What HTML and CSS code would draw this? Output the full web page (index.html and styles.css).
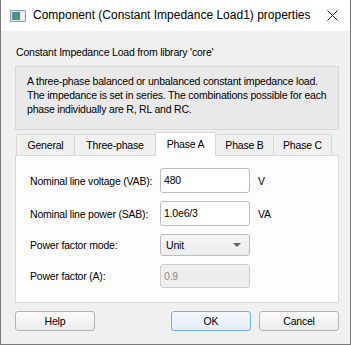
FILE: index.html
```html
<!DOCTYPE html>
<html lang="en">
<head>
    <meta charset="UTF-8">
    <title>Component (Constant Impedance Load1) properties</title>
    <link rel="stylesheet" href="styles.css">
</head>
<body>
    <div class="window">
        <!-- Barra de titulo -->
        <div class="titlebar">
            <svg class="app-icon" width="16" height="12" viewBox="0 0 16 12">
                <defs>
                    <linearGradient id="g1" x1="0" y1="0" x2="1" y2="1">
                        <stop offset="0" stop-color="#3d8fb0"/>
                        <stop offset="1" stop-color="#4f9a5c"/>
                    </linearGradient>
                </defs>
                <rect x="0.5" y="0.5" width="15" height="11" fill="#dfe3e6" stroke="#9aa3aa"/>
                <rect x="2" y="2" width="8" height="8" fill="url(#g1)"/>
                <rect x="11" y="2" width="3" height="8" fill="#f4f6f7"/>
            </svg>
            <span class="title">Component (Constant Impedance Load1) properties</span>
            <svg class="close" width="11" height="11" viewBox="0 0 11 11">
                <path d="M0.5 0.5 L10.5 10.5 M10.5 0.5 L0.5 10.5" stroke="#1a1a1a" stroke-width="1"/>
            </svg>
        </div>

        <div class="content">
            <div class="source">Constant Impedance Load from library 'core'</div>

            <div class="description">
                A three-phase balanced or unbalanced constant impedance load.<br>
                The impedance is set in series. The combinations possible for each<br>
                phase individually are R, RL and RC.
            </div>

            <!-- Pestañas -->
            <div class="tabs">
                <div class="tab">General</div>
                <div class="tab tab-three">Three-phase</div>
                <div class="tab active">Phase A</div>
                <div class="tab">Phase B</div>
                <div class="tab">Phase C</div>
            </div>

            <div class="pane">
                <div class="row r1">
                    <label>Nominal line voltage (VAB):</label>
                    <div class="field">480</div>
                    <span class="unit">V</span>
                </div>
                <div class="row r2">
                    <label>Nominal line power (SAB):</label>
                    <div class="field">1.0e6/3</div>
                    <span class="unit">VA</span>
                </div>
                <div class="row r3">
                    <label>Power factor mode:</label>
                    <div class="field combo">Unit<span class="arrow"></span></div>
                </div>
                <div class="row r4">
                    <label>Power factor (A):</label>
                    <div class="field disabled">0.9</div>
                </div>
            </div>

            <div class="buttons">
                <button class="btn">Help</button>
                <span class="spacer"></span>
                <button class="btn default">OK</button>
                <button class="btn">Cancel</button>
            </div>
        </div>
    </div>
</body>
</html>
```

FILE: styles.css
```css
body {
    margin: 0;
    font-family: "Liberation Sans", Arial, sans-serif;
    font-size: 10.5px;
    letter-spacing: -0.2px;
    color: #000;
    background-color: #f0f0f0;
    white-space: nowrap;
}

.window {
    width: 349px;
    height: 344px;
    background-color: #f0f0f0;
    border: 1px solid #7a7a7a;
    border-top: none;
    display: flex;
    flex-direction: column;
}

/* Barra de titulo */
.titlebar {
    height: 31px;
    background-color: #ffffff;
    display: flex;
    align-items: center;
    padding-left: 9px;
}

.app-icon {
    margin-right: 7px;
    flex-shrink: 0;
}

.title {
    font-size: 12px;
    letter-spacing: 0;
    color: #000;
    flex: 1;
    margin-top: -1px;
}

.close {
    flex-shrink: 0;
    margin-right: 12px;
}

.content {
    padding: 0 11px 0 14px;
}

.source {
    margin-top: 15px;
    padding-left: 1px;
    line-height: 12px;
    height: 12px;
}

.description {
    margin-top: 8px;
    height: 47px;
    padding: 7px 10px 8px 11px;
    border: 1px solid #d8d8d8;
    background-color: #e9e9e9;
    line-height: 14px;
}

/* Pestañas */
.tabs {
    display: flex;
    align-items: flex-end;
    margin-top: 2px;
    padding-left: 1px;
    height: 23px;
}

.tab {
    box-sizing: border-box;
    width: 59px;
    height: 21px;
    line-height: 20px;
    text-align: center;
    border: 1px solid #d9d9d9;
    border-bottom: none;
    background-color: #f0f0f0;
    border-radius: 2px 2px 0 0;
    margin-right: -1px;
}

.tab-three {
    width: 82px;
}

.tab.active {
    width: 61px;
    height: 24px;
    line-height: 22px;
    background-color: #ffffff;
    position: relative;
    z-index: 1;
    margin-bottom: -1px;
}

.pane {
    height: 134px;
    border: 1px solid #d9d9d9;
    background-color: #fdfdfd;
    padding: 12px 14px 0 14px;
}

.row {
    display: flex;
    align-items: center;
    margin-bottom: 8px;
}

.row label {
    width: 130px;
}

.field {
    box-sizing: border-box;
    width: 90px;
    height: 25px;
    line-height: 23px;
    padding-left: 3px;
    border: 1px solid #bdbdbd;
    border-radius: 3px;
    background-color: #ffffff;
}

.r3 .field {
    height: 22px;
    line-height: 20px;
}

.r4 .field {
    height: 24px;
    line-height: 22px;
}

.combo {
    display: flex;
    justify-content: space-between;
    align-items: center;
    padding-left: 5px;
    padding-right: 8px;
    background: linear-gradient(#f6f6f6, #ececec);
}

.arrow {
    width: 0;
    height: 0;
    border-left: 4px solid transparent;
    border-right: 4px solid transparent;
    border-top: 4px solid #5f5f5f;
}

.disabled {
    background-color: #eeeeee;
    border-color: #cccccc;
    color: #8a8a8a;
}

.unit {
    margin-left: 8px;
}

/* Botones */
.buttons {
    display: flex;
    gap: 8px;
    margin-top: 8px;
}

.spacer {
    flex: 1;
}

.btn {
    width: 80px;
    height: 20px;
    padding: 0;
    font-family: "Liberation Sans", Arial, sans-serif;
    font-size: 10.5px;
    letter-spacing: -0.2px;
    color: #000;
    border: 1px solid #b4b4b4;
    border-radius: 3px;
    background: linear-gradient(#fbfbfb, #ececec);
}

.btn.default {
    border-color: #73aee6;
    background: linear-gradient(#f3f8fd, #e4eef8);
}
```
